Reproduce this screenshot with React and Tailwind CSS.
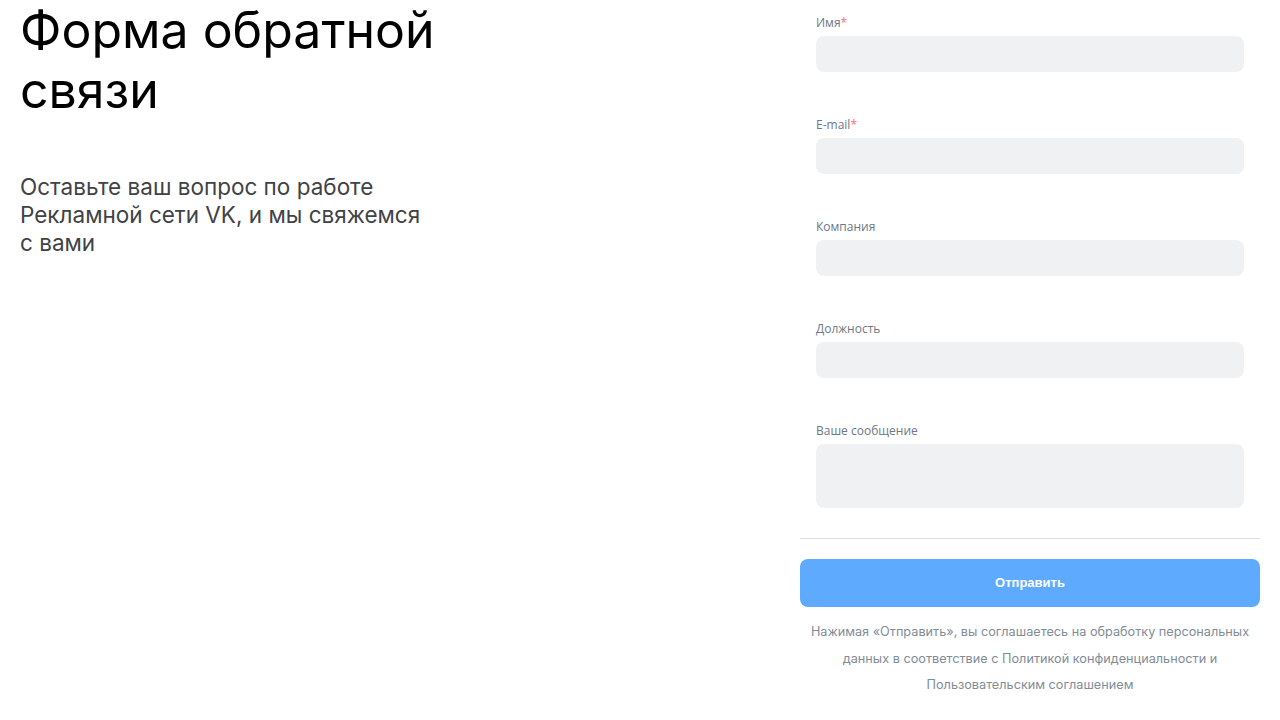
import React from "react";

const fields = [
    { label: "Имя", required: true },
    { label: "E-mail", required: true },
    { label: "Компания" },
    { label: "Должность" },
    { label: "Ваше сообщение", textarea: true },
];

const App = () => {
    return (
        <div className="min-h-screen bg-white flex justify-between pl-[20px] pr-[20px] font-['Inter',sans-serif]">
            {/* Left - title */}
            <div className="w-[440px]">
                <h1 className="text-[50px] leading-[60px] font-normal text-black">
                    Форма обратной
                    <br />
                    связи
                </h1>
                <p className="mt-[53px] text-[22.5px] leading-[28px] text-[#3f4247] w-[415px]">
                    Оставьте ваш вопрос по работе Рекламной сети VK, и мы свяжемся с вами
                </p>
            </div>

            {/* Right - form */}
            <div className="w-[460px] pt-[14px]">
                <div className="px-[16px] flex flex-col gap-[44px]">
                    {fields.map((f) => (
                        <div key={f.label}>
                            <label className="block mb-[4px] text-[12px] leading-[18px] text-[#6d7885] font-['Open_Sans',sans-serif]">
                                {f.label}
                                {f.required && <span className="text-[#ff6b81]">*</span>}
                            </label>
                            {f.textarea ? (
                                <textarea className="block w-full h-[64px] rounded-[8px] bg-[#f0f1f3] resize-none outline-none" />
                            ) : (
                                <input className="block w-full h-[36px] rounded-[8px] bg-[#f0f1f3] outline-none" />
                            )}
                        </div>
                    ))}
                </div>

                <div className="mt-[30px] h-px bg-[#dcdcdc]" />

                <button className="mt-[20px] w-full h-[48px] rounded-[8px] bg-[#5eaaff] text-white text-[13px] font-bold font-['Liberation_Sans',sans-serif]">
                    Отправить
                </button>

                <p className="mt-[12px] text-center text-[12.7px] leading-[26.5px] text-[#818c99]">
                    Нажимая «Отправить», вы соглашаетесь на обработку персональных данных в соответствие с Политикой конфиденциальности и Пользовательским соглашением
                </p>
            </div>
        </div>
    );
};

export default App;
